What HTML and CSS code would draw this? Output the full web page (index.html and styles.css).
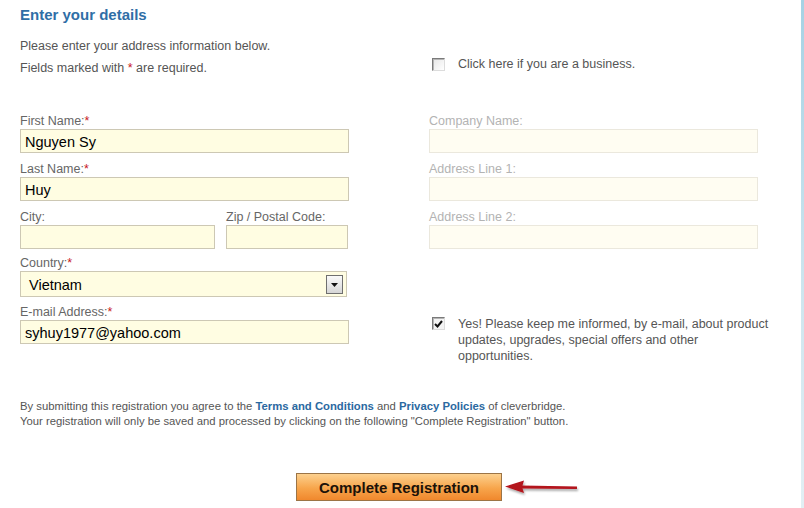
FILE: index.html
```html
<!DOCTYPE html>
<html>
<head>
<meta charset="utf-8">
<link rel="stylesheet" href="styles.css">
</head>
<body>
<div class="page">
  <div class="main">
    <h1 class="title">Enter your details</h1>
    <div class="top">
      <div class="intro">
        <p>Please enter your address information below.</p>
        <p>Fields marked with <span class="req">*</span> are required.</p>
      </div>
      <div class="biz">
        <span class="cb"></span>
        <span>Click here if you are a business.</span>
      </div>
    </div>

    <div class="cols">
      <div class="col">
        <div class="field">
          <label>First Name:<span class="req">*</span></label>
          <input class="inp" type="text" value="Nguyen Sy" readonly>
        </div>
        <div class="field">
          <label>Last Name:<span class="req">*</span></label>
          <input class="inp" type="text" value="Huy" readonly>
        </div>
        <div class="pair">
          <div class="field city">
            <label>City:</label>
            <input class="inp" type="text" value="" readonly>
          </div>
          <div class="field zip">
            <label>Zip / Postal Code:</label>
            <input class="inp" type="text" value="" readonly>
          </div>
        </div>
        <div class="field country">
          <label>Country:<span class="req">*</span></label>
          <div class="select">
            <span>Vietnam</span>
            <span class="sel-btn"><svg width="7" height="4" viewBox="0 0 7 4"><path d="M0 0h7L3.5 4z" fill="#111"/></svg></span>
          </div>
        </div>
        <div class="field email">
          <label>E-mail Address:<span class="req">*</span></label>
          <input class="inp" type="text" value="syhuy1977@yahoo.com" readonly>
        </div>
      </div>

      <div class="col">
        <div class="field dis">
          <label>Company Name:</label>
          <input class="inp" type="text" value="" readonly>
        </div>
        <div class="field dis">
          <label>Address Line 1:</label>
          <input class="inp" type="text" value="" readonly>
        </div>
        <div class="field dis">
          <label>Address Line 2:</label>
          <input class="inp" type="text" value="" readonly>
        </div>
        <div class="news">
          <span class="cb checked"><svg width="9" height="8" viewBox="0 0 9 8"><path d="M1 4l2.5 2.5L8 1" fill="none" stroke="#111" stroke-width="2"/></svg></span>
          <span class="news-text">Yes! Please keep me informed, by e-mail, about product updates, upgrades, special offers and other opportunities.</span>
        </div>
      </div>
    </div>

    <div class="terms">
      <p>By submitting this registration you agree to the <a>Terms and Conditions</a> and <a>Privacy Policies</a> of cleverbridge.</p>
      <p>Your registration will only be saved and processed by clicking on the following "Complete Registration" button.</p>
    </div>

    <div class="actions">
      <div class="btn-wrap">
        <button class="btn">Complete Registration</button>
        <svg class="arrow" width="80" height="20" viewBox="0 0 80 20">
          <defs>
            <filter id="sh" x="-10%" y="-50%" width="130%" height="250%">
              <feDropShadow dx="1" dy="2" stdDeviation="1.2" flood-color="#000" flood-opacity="0.35"/>
            </filter>
          </defs>
          <g filter="url(#sh)">
            <path d="M18 7.5 L74 8.5 L74 11 L18 10.5 Z" fill="#b3121c"/>
            <path d="M2 8.5 L21 2.5 L19 9 L21 15 Z" fill="#b3121c"/>
          </g>
        </svg>
      </div>
    </div>
  </div>
  <div class="stripe"></div>
</div>
</body>
</html>
```

FILE: styles.css
```css
* { box-sizing: border-box; }
html, body { margin: 0; padding: 0; background: #fff; }
body {
  font-family: "Liberation Sans", Arial, sans-serif;
  color: #555;
  width: 804px;
  height: 508px;
  overflow: hidden;
}
p { margin: 0; }

.page { display: flex; height: 508px; }
.main { width: 801px; padding: 6px 0 0 20px; }
.stripe {
  width: 3px;
  background: linear-gradient(#a6d2e4, #cfe6ef 60%, #e2eff4);
}

.title {
  margin: 0;
  font-size: 15px;
  line-height: 18px;
  font-weight: bold;
  color: #2f6ea6;
}

.top {
  display: grid;
  grid-template-columns: 329px 329px;
  column-gap: 80px;
  margin-top: 11px;
}
.intro { font-size: 12.5px; line-height: 22px; color: #555; }
.req { color: #c8151b; }

.biz {
  display: flex;
  align-items: center;
  padding-top: 14px;
  font-size: 12.5px;
  line-height: 16px;
  color: #555;
}
.cb {
  flex: none;
  width: 13px;
  height: 13px;
  margin: 0 13px 0 3px;
  border: 1px solid;
  border-color: #7a7a7a #dcdcdc #dcdcdc #7a7a7a;
  background: linear-gradient(135deg, #e6e6e6, #ffffff);
  display: flex;
  align-items: center;
  justify-content: center;
  box-shadow: inset 1px 1px 0 #b5b5b5;
}
.cb.checked { background: #f4f4f4; }

.cols {
  display: grid;
  grid-template-columns: 329px 329px;
  column-gap: 80px;
  margin-top: 34px;
}
.col { display: flex; flex-direction: column; gap: 8px; }

.field { display: flex; flex-direction: column; }
.field label {
  font-size: 12.5px;
  line-height: 16px;
  color: #666;
}
.inp {
  display: block;
  width: 100%;
  height: 24px;
  margin: 0;
  padding: 2px 4px 0;
  border: 1px solid #cdc8b4;
  background: #fffde2;
  font-family: "Liberation Sans", Arial, sans-serif;
  font-size: 14.5px;
  color: #000;
  outline: none;
}
.pair { display: flex; justify-content: space-between; }
.city { width: 195px; }
.zip { width: 122px; margin-right: 1px; }

.country { margin-top: -2px; }
.select {
  height: 26px;
  width: 327px;
  border: 1px solid #cdc8b4;
  background: #fffde2;
  display: flex;
  align-items: center;
  justify-content: space-between;
  padding: 1px 3px 0 8px;
  font-size: 14.5px;
  color: #000;
}
.sel-btn {
  width: 17px;
  height: 19px;
  border: 1px solid #6f6f6f;
  background: linear-gradient(#fafafa, #d6d6d6);
  display: flex;
  align-items: center;
  justify-content: center;
}

.email { margin-top: -1px; }

.dis label { color: #b3b3b3; }
.dis .inp { background: #fffdf2; border-color: #ebe8dd; }

.news {
  display: flex;
  align-items: flex-start;
  margin-top: 59px;
  font-size: 12.5px;
  line-height: 16px;
  color: #555;
}
.news .cb { margin-top: 1px; }
.news-text { width: 315px; flex: none; }

.terms {
  margin-top: 35px;
  font-size: 11.3px;
  line-height: 15px;
  color: #555;
}
.terms a { color: #2b69a1; font-weight: bold; }

.actions {
  width: 758px;
  display: flex;
  justify-content: center;
  margin-top: 44px;
}
.btn-wrap { position: relative; }
.btn {
  display: block;
  width: 206px;
  height: 28px;
  margin: 0;
  border: 1px solid #9b7446;
  background: linear-gradient(#fcd08e, #f7a54b 55%, #f0882d);
  font-family: "Liberation Sans", Arial, sans-serif;
  font-size: 15px;
  font-weight: bold;
  color: #1c1209;
  padding: 0;
}
.arrow {
  position: absolute;
  left: 207px;
  top: 5px;
}
```
